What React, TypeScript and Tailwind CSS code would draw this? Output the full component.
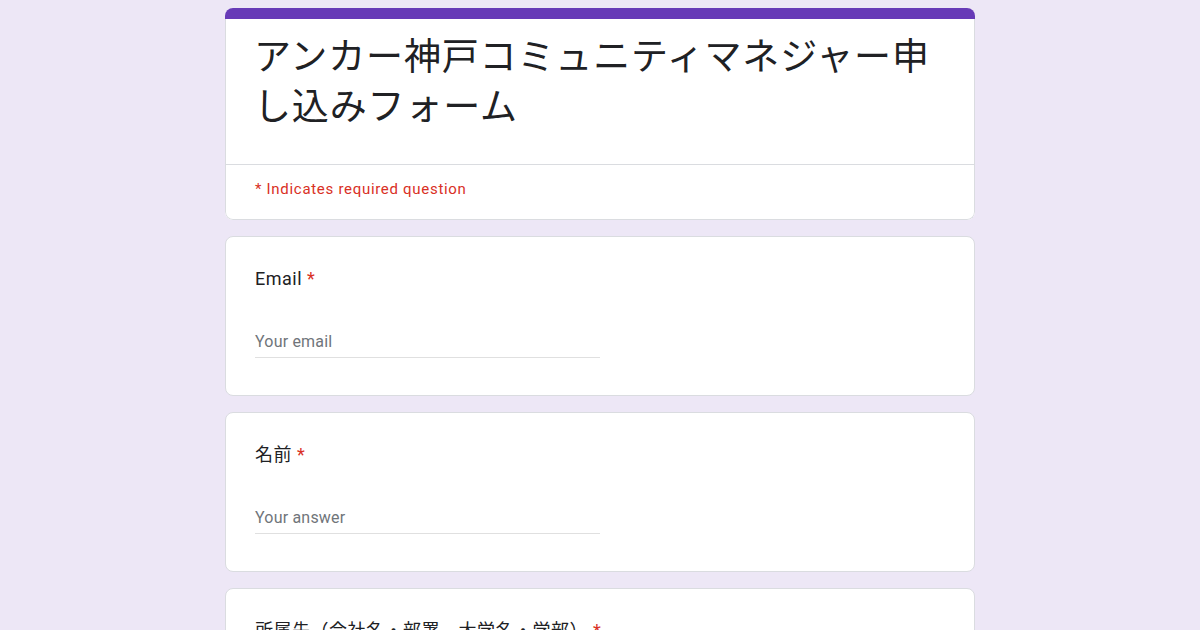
const font = "font-['Roboto','Noto_Sans_CJK_JP',sans-serif]";

type QuestionProps = {
  label: string;
  placeholder: string;
};

function Question({ label, placeholder }: QuestionProps) {
  return (
    <div className="bg-white border border-[#dadce0] rounded-lg px-[29px] pt-[30px] pb-[37px]">
      <div className="text-[18px] leading-6 tracking-[0.5px] text-[#202124]">
        {label}
        <span className="text-[#d93025] ml-[5px]">*</span>
      </div>
      <div className="mt-[39px] w-[345px] border-b border-[#e0e0e0] pb-[3px] text-[16px] leading-6 tracking-[0.2px] text-[#70757a]">
        {placeholder}
      </div>
    </div>
  );
}

export default function App() {
  return (
    <div className={`min-h-screen h-[630px] overflow-hidden bg-[#ede7f6] pt-2 ${font}`}>
      <div className="w-[750px] mx-auto flex flex-col gap-4">
        <div className="bg-white rounded-lg overflow-hidden">
          <div className="h-[11px] bg-[#673ab7]" />
          <div className="border-x border-b border-[#dadce0] rounded-b-lg">
            <div className="pl-[28px] pr-[30px] pt-[14px] pb-[31px] border-b border-[#dadce0]">
              <h1 className="text-[37px] leading-[50px] tracking-[0.85px] text-[#202124] font-normal">
                アンカー神戸コミュニティマネジャー申し込みフォーム
              </h1>
            </div>
            <div className="px-[29px] pt-[14px] pb-[20px] text-[15px] leading-5 tracking-[0.7px] text-[#d93025]">
              * Indicates required question
            </div>
          </div>
        </div>
        <Question label="Email" placeholder="Your email" />
        <Question label="名前" placeholder="Your answer" />
        <Question label="所属先（会社名・部署、大学名・学部）" placeholder="Your answer" />
      </div>
    </div>
  );
}
